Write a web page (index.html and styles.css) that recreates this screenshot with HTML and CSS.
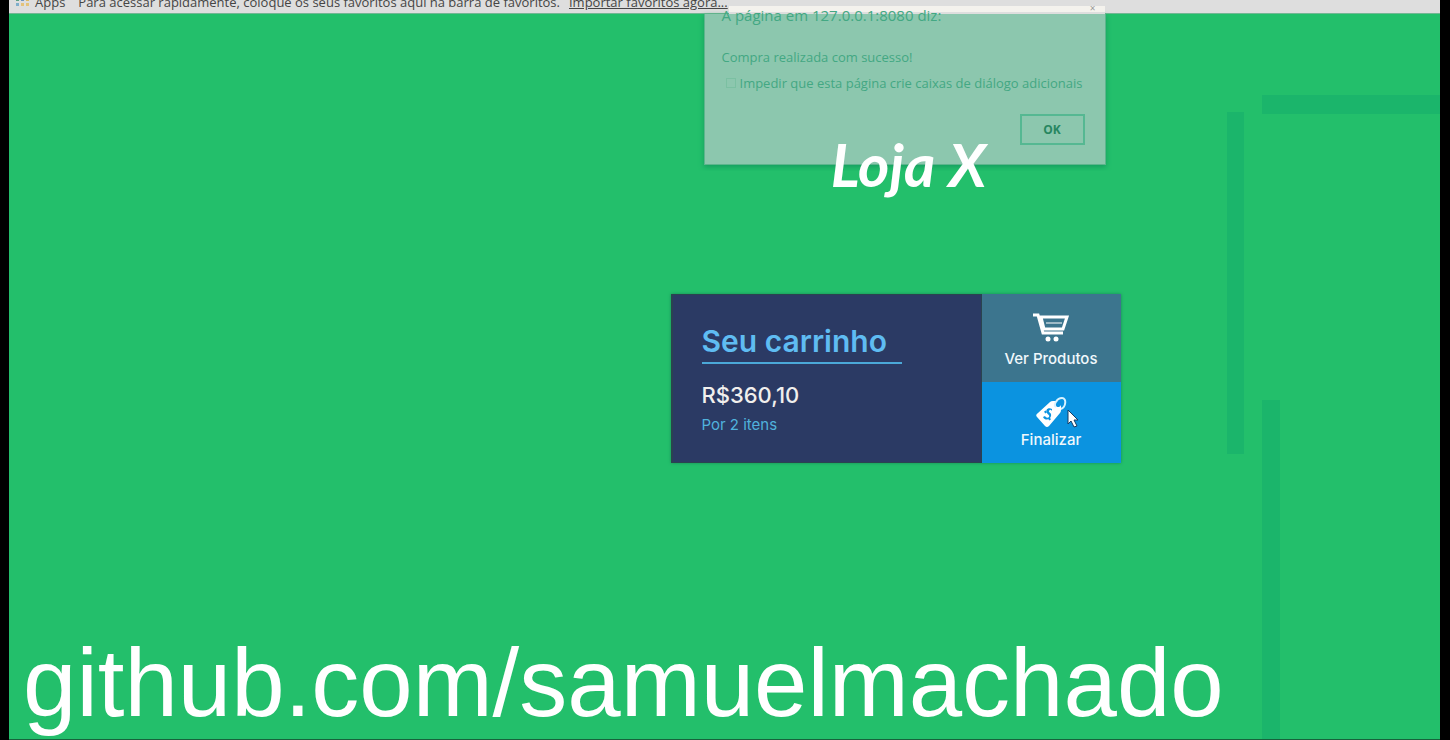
FILE: index.html
```html
<!DOCTYPE html>
<html lang="pt-BR">
<head>
<meta charset="utf-8">
<title>Loja X</title>
<link rel="stylesheet" href="styles.css">
</head>
<body>
<div class="screen">
  <nav class="bookmarks" aria-label="Favoritos">
    <svg class="apps-icon" width="14" height="14" viewBox="0 0 14 14" aria-hidden="true">
      <path fill="#d66" d="M0 0h3v3H0z"/><path fill="#5a9" d="M5 0h3v3H5z"/><path fill="#79b" d="M10 0h3v3h-3z"/>
      <path fill="#5f9f83" d="M0 5h3v3H0z"/><path fill="#6f93bd" d="M5 5h3v3H5z"/><path fill="#dcb765" d="M10 5h3v3h-3z"/>
      <path fill="#7faecb" d="M0 10h3v3H0z"/><path fill="#e3c27a" d="M5 10h3v3H5zM10 10h3v3h-3z"/>
    </svg>
    <span class="apps">Apps</span>
    <span class="hint">Para acessar rapidamente, coloque os seus favoritos aqui na barra de favoritos.</span>
    <a class="import" href="#">Importar favoritos agora...</a>
  </nav>

  <main class="store">
    <section class="dialog" role="dialog" aria-labelledby="dialog-title">
      <div class="dialog-edge"><span>×</span></div>
      <h2 class="dialog-title" id="dialog-title">A página em 127.0.0.1:8080 diz:</h2>
      <p class="dialog-text">Compra realizada com sucesso!</p>
      <label class="dialog-check"><input type="checkbox"> Impedir que esta página crie caixas de diálogo adicionais</label>
      <button class="dialog-ok" type="button">OK</button>
    </section>

    <h1 class="logo">Loja X</h1>

    <section class="cart">
      <div class="summary">
        <h2 class="cart-title">Seu carrinho</h2>
        <p class="price">R$360,10</p>
        <p class="items">Por 2 itens</p>
      </div>
      <div class="actions">
        <button class="action products" type="button">
          <svg width="38" height="30" viewBox="0 0 38 30" aria-hidden="true">
            <path d="M1 3h5l5 18h20" fill="none" stroke="#fff" stroke-width="3"/>
            <path d="M9 5h26l-4 12H12z" fill="none" stroke="#fff" stroke-width="3"/>
            <path d="M14 11h16" fill="none" stroke="#fff" stroke-width="1"/>
            <circle cx="16" cy="27" r="2.5" fill="#fff"/><circle cx="24" cy="27" r="2.5" fill="#fff"/>
          </svg>
          <span>Ver Produtos</span>
        </button>
        <button class="action checkout" type="button">
          <svg width="32" height="32" viewBox="0 0 32 32" aria-hidden="true">
            <path fill="#fff" fill-rule="evenodd" d="M3 17 15 6q1-1 3-1l5 0a3 3 0 1 0 3 4v5q0 2-1 3L14 30q-2 2-4 0L2 21q-2-2 1-4zM17 13c-4-2-7 1-5 4 1 2 3 2 2 4-1 1-3 1-4-1l-2 1c2 4 7 3 8-1 1-3-3-4-2-5 1-2 2-1 3 0z"/>
            <path d="M21 11c-3-2 1-9 6-9s4 9-1 11" fill="none" stroke="#d9f3ff" stroke-width="2"/>
            <path d="m10 15 1 2m3 5 1 2" stroke="#0b93e0" stroke-width="2"/>
          </svg>
          <span>Finalizar</span>
          <svg class="pointer" width="14" height="20" viewBox="0 0 14 20" aria-hidden="true">
            <path d="M2 1v14l3-3 3 6 3-1-3-6h4z" fill="#fff" stroke="#173b63"/>
          </svg>
        </button>
      </div>
    </section>
  </main>

  <footer class="credit"><a href="https://github.com/samuelmachado">github.com/samuelmachado</a></footer>
</div>
</body>
</html>
```
FILE: styles.css
```css
* { box-sizing: border-box; }

body {
  margin: 0;
  padding: 0 10px 0 9px;
  background: #000;
  font-family: "Open Sans", "Liberation Sans", sans-serif;
}

h1, h2, p { margin: 0; font-weight: 400; }

.screen {
  display: flex;
  flex-direction: column;
  min-height: 100vh;
  border-bottom: 1px solid #17623c;
  background:
    linear-gradient(#1bb56b, #1bb56b) right 0 top 95px / 178px 19px no-repeat,
    linear-gradient(#1bb56b, #1bb56b) right 196px top 112px / 17px 342px no-repeat,
    linear-gradient(#1bb56b, #1bb56b) right 160px top 400px / 18px 340px no-repeat,
    #23bf6b;
}

/* Browser strip */
.bookmarks {
  display: flex;
  align-items: flex-end;
  height: 14px;
  padding-left: 7px;
  overflow: hidden;
  border-bottom: 1px solid #72b794;
  background: #dedede;
  color: #454545;
  font-size: 13px;
  line-height: 16px;
  white-space: nowrap;
}

.bookmarks > * { flex: none; margin-bottom: 3px; }
.bookmarks .apps-icon { margin-bottom: 6px; }
.apps { margin-left: 5px; }
.hint { margin-left: 13px; }
.import { margin-left: 9px; color: inherit; }

.store {
  position: relative;
  flex: 1;
  display: flex;
  flex-direction: column;
  align-items: center;
  padding-left: 342px;
}

/* Fading alert, drawn beneath the logo */
.dialog {
  position: absolute;
  top: 0;
  left: calc(50% + 179px);
  width: 402px;
  margin-left: -200px;
  padding: 0 20px 19px 17px;
  display: flex;
  flex-direction: column;
  border: 1px solid #5db58d;
  border-top: 0;
  background: #8cc7ae;
  box-shadow: 0 2px 5px #159c60;
  color: #43a883;
  font-size: 13px;
  line-height: 16px;
  clip-path: inset(-8px -6px -6px -6px);
}

.dialog-edge {
  position: absolute;
  top: -8px;
  left: 24px;
  right: 0;
  height: 8px;
  padding-right: 9px;
  border-bottom: 2px solid #dedede;
  background: #f4f2ed;
  color: #999;
  font-size: 10px;
  line-height: 4px;
  text-align: right;
}

.dialog-title { position: relative; margin-top: -9px; font-size: 15px; line-height: 20px; }
.dialog-text { margin-top: 24px; }
.dialog-check { display: flex; align-items: center; gap: 4px; margin-top: 10px; padding-left: 4px; white-space: nowrap; }
.dialog-check input {
  appearance: none;
  width: 10px;
  height: 10px;
  margin: 0;
  border: 1px solid #7bc0a2;
}

.dialog-ok {
  align-self: flex-end;
  width: 65px;
  height: 31px;
  margin-top: 23px;
  border: 2px solid #55b892;
  background: transparent;
  color: #278660;
  font: 700 12px "Open Sans", sans-serif;
}

.logo {
  position: relative;
  margin: 114px 0 0 26px;
  color: #fff;
  font: italic 700 60px/72px Lato, sans-serif;
}

/* Cart card */
.cart {
  display: flex;
  width: 450px;
  margin-top: 94px;
  background: #2b3a64;
  box-shadow: 0 0 3px #178b58;
  font-family: Inter, sans-serif;
}

.summary {
  flex: 1;
  padding: 28px 29px;
  border: 2px solid #2a444f;
  border-width: 1px 1px 1px 2px;
}

.cart-title {
  width: 200px;
  padding-bottom: 2px;
  border-bottom: 2px solid #4ba8d8;
  color: #5fbcf2;
  font-size: 30px;
  font-weight: 600;
  line-height: 37px;
}

.price { margin-top: 17px; color: #f1efed; font-size: 22px; font-weight: 500; line-height: 28px; }
.items { margin-top: 7px; color: #50b2dd; font-size: 15px; line-height: 18px; }

.actions { display: grid; grid-template-rows: 88px 1fr; width: 139px; }

.action {
  position: relative;
  display: flex;
  flex-direction: column;
  align-items: center;
  padding: 0;
  border: 0;
  color: #f0f8fc;
  font: 500 15px/18px Inter, sans-serif;
}

.products { gap: 7px; padding-top: 18px; background: #3c758e; }
.products span { line-height: 20px; }
.checkout { gap: 3px; padding-top: 14px; background: #0b93e0; }
.pointer { position: absolute; top: 27px; left: 84px; }

.credit {
  padding: 0 14px 8px;
  font: 96px/96px "Liberation Sans", sans-serif;
}

.credit a { color: #fff; text-decoration: none; }
```
